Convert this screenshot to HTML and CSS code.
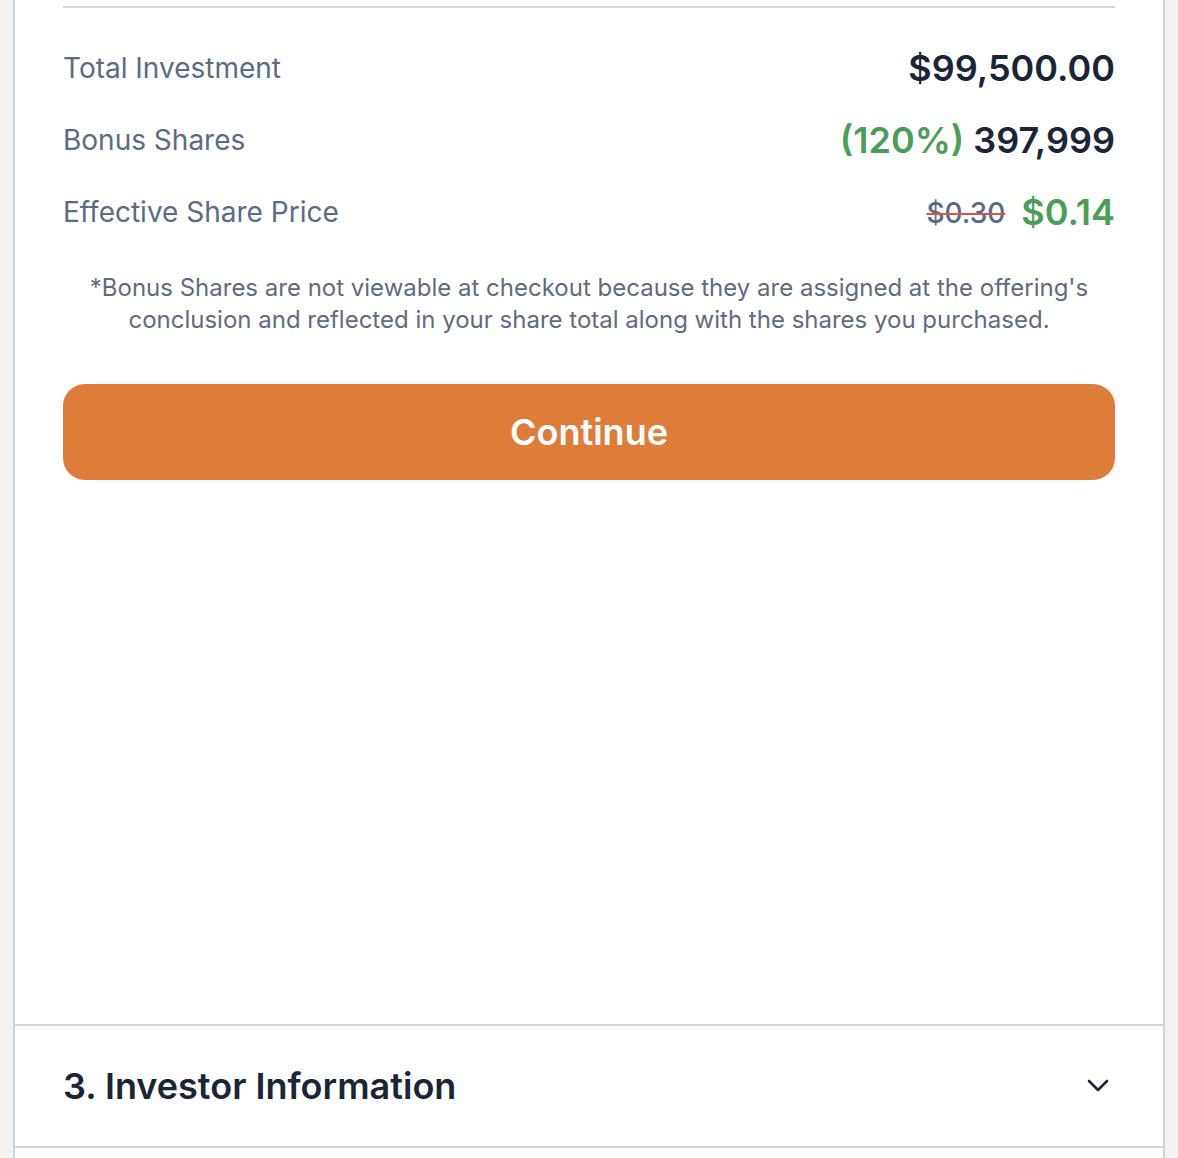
FILE: index.html
```html
<!DOCTYPE html>
<html lang="en">
<head>
<meta charset="utf-8">
<link rel="stylesheet" href="styles.css">
<title>Checkout</title>
</head>
<body>
<div class="page">
  <section class="card">
    <div class="step-body">
      <hr class="divider">
      <dl class="summary">
        <div class="row">
          <dt class="label">Total Investment</dt>
          <dd class="value">$99,500.00</dd>
        </div>
        <div class="row">
          <dt class="label">Bonus Shares</dt>
          <dd class="value"><span class="green">(120%)</span> 397,999</dd>
        </div>
        <div class="row">
          <dt class="label">Effective Share Price</dt>
          <dd class="value"><s class="old">$0.30</s> <span class="green">$0.14</span></dd>
        </div>
      </dl>
      <p class="note">*Bonus Shares are not viewable at checkout because they are assigned at the offering's conclusion and reflected in your share total along with the shares you purchased.</p>
      <button class="continue" type="button">Continue</button>
    </div>
    <div class="step-header">
      <h2 class="step-title">3. Investor Information</h2>
      <svg class="chevron" width="22" height="14" viewBox="0 0 22 14" aria-hidden="true">
        <path d="M2 2 L11 11 L20 2" fill="none" stroke="#1e2737" stroke-width="2.6" stroke-linecap="round" stroke-linejoin="round"/>
      </svg>
    </div>
  </section>
  <section class="card next"></section>
</div>
</body>
</html>
```

FILE: styles.css
```css
* { box-sizing: border-box; }
html, body { margin: 0; padding: 0; }
body {
  background: #f5f3f1;
  font-family: Inter, "Noto Sans", "Liberation Sans", sans-serif;
  color: #1b2536;
}
.page {
  padding: 0 13px;
}
.card {
  background: #fff;
  border-left: 2px solid #d0d4df;
  border-right: 2px solid #d0d4df;
}
.card.next {
  height: 40px;
}
.step-body {
  padding: 6px 48px 544px;
  border-bottom: 2px solid #d0d4df;
}
.divider {
  margin: 0;
  border: none;
  height: 2px;
  background: #d1d5e1;
}
.summary {
  margin: 24px 0 0;
}
.row {
  display: flex;
  justify-content: space-between;
  align-items: center;
  height: 72px;
}
.label {
  font-size: 28px;
  color: #5b6b86;
}
.value {
  margin: 0;
  font-size: 36px;
  font-weight: 600;
  color: #1b2536;
}
.green { color: #4a9e58; }
.old {
  font-size: 28px;
  font-weight: 500;
  color: #5b6b86;
  text-decoration-color: #d9534f;
  text-decoration-thickness: 2px;
  margin-right: 7px;
  vertical-align: 2px;
}
.note {
  margin: 24px 0 0;
  font-size: 24px;
  line-height: 32px;
  text-align: center;
  color: #5f6b7e;
  padding: 0 10px;
}
.continue {
  display: block;
  width: 100%;
  height: 96px;
  margin-top: 48px;
  border: none;
  border-radius: 22px;
  background: #de7d3a;
  color: #fff;
  font-family: inherit;
  font-size: 36px;
  font-weight: 600;
  cursor: pointer;
}
.step-header {
  display: flex;
  align-items: center;
  justify-content: space-between;
  height: 122px;
  padding: 0 54px 0 48px;
  border-bottom: 2px solid #d0d4df;
}
.step-title {
  margin: 0;
  font-size: 36px;
  font-weight: 600;
  color: #1b2536;
}
.chevron { display: block; }
```
